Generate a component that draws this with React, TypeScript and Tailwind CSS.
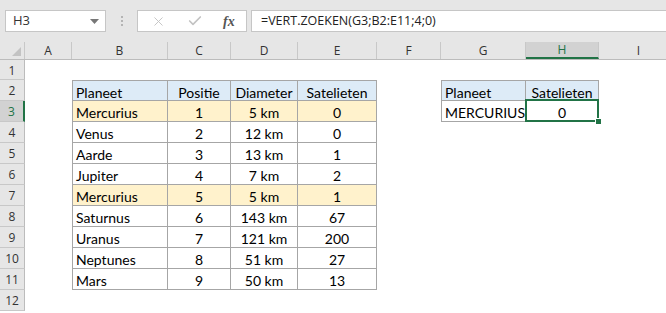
import React from 'react';
import { X, Check } from 'lucide-react';

type Cell = {
  t?: string;
  a?: 'l' | 'c';
  bg?: 'blue' | 'orange';
  box?: boolean;
  tb?: boolean;
  lb?: boolean;
  active?: boolean;
};

const COLS = ['A', 'B', 'C', 'D', 'E', 'F', 'G', 'H', 'I'];
const WIDTHS = [
  'w-[47px]',
  'w-[96px]',
  'w-[63px]',
  'w-[67px]',
  'w-[79px]',
  'w-[64px]',
  'w-[85px]',
  'w-[73px]',
  'w-[80px]',
];

const planets: [string, string, string, string, boolean][] = [
  ['Mercurius', '1', '5 km', '0', true],
  ['Venus', '2', '12 km', '0', false],
  ['Aarde', '3', '13 km', '1', false],
  ['Jupiter', '4', '7 km', '2', false],
  ['Mercurius', '5', '5 km', '1', true],
  ['Saturnus', '6', '143 km', '67', false],
  ['Uranus', '7', '121 km', '200', false],
  ['Neptunes', '8', '51 km', '27', false],
  ['Mars', '9', '50 km', '13', false],
];

// build the sheet contents, row by row (rows 1..12, cols A..I)
function buildRows(): Cell[][] {
  const rows: Cell[][] = [];
  for (let r = 1; r <= 12; r++) rows.push(COLS.map(() => ({})));

  const head = rows[1];
  head[1] = { t: 'Planeet', a: 'l', bg: 'blue', box: true, tb: true, lb: true };
  head[2] = { t: 'Positie', a: 'c', bg: 'blue', box: true, tb: true };
  head[3] = { t: 'Diameter', a: 'c', bg: 'blue', box: true, tb: true };
  head[4] = { t: 'Satelieten', a: 'c', bg: 'blue', box: true, tb: true };
  head[6] = { t: 'Planeet', a: 'l', bg: 'blue', box: true, tb: true, lb: true };
  head[7] = { t: 'Satelieten', a: 'c', bg: 'blue', box: true, tb: true };

  planets.forEach(([name, pos, dia, sat, hl], i) => {
    const row = rows[i + 2];
    const bg = hl ? 'orange' : undefined;
    row[1] = { t: name, a: 'l', bg, box: true, lb: true };
    row[2] = { t: pos, a: 'c', bg, box: true };
    row[3] = { t: dia, a: 'c', bg, box: true };
    row[4] = { t: sat, a: 'c', bg, box: true };
  });

  rows[2][6] = { t: 'MERCURIUS', a: 'l', box: true, lb: true };
  rows[2][7] = { t: '0', a: 'c', box: true, active: true };
  return rows;
}

const SheetCell: React.FC<{ c: Cell; w: string }> = ({ c, w }) => {
  const cls = [
    'relative h-full shrink-0 flex items-center pt-[3px] text-[14px] text-black whitespace-nowrap',
    w,
    c.active ? '' : 'overflow-hidden',
    c.a === 'c' ? 'justify-center' : 'pl-[3px]',
    c.bg === 'blue' ? 'bg-[#ddebf7]' : c.bg === 'orange' ? 'bg-[#fff2cc]' : 'bg-white',
    c.box ? 'border-r border-b border-[#a6a6a6]' : '',
    c.tb ? 'border-t' : '',
    c.lb ? 'border-l' : '',
  ].join(' ');
  return (
    <div className={cls}>
      {c.t}
      {c.active && (
        <>
          <div className="absolute -top-[2px] -left-px -right-px -bottom-px border-2 border-[#217346] z-10" />
          <div className="absolute -right-[4px] -bottom-[4px] w-[7px] h-[7px] bg-[#217346] border border-white z-20" />
        </>
      )}
    </div>
  );
};

export default function App() {
  const rows = buildRows();

  return (
    <div
      className="w-[666px] h-[313px] overflow-hidden bg-white"
      style={{ fontFamily: 'Lato, "Open Sans", sans-serif' }}
    >
      {/* formula bar */}
      <div className="h-[42px] bg-[#e6e6e6] flex items-start pt-[10px] pl-[5px]">
        <div className="w-[101px] h-[22px] bg-white border border-[#c6c6c6] flex items-center justify-between pl-[7px] pr-[6px]">
          <span className="text-[13px] text-[#333]" style={{ fontFamily: '"Open Sans", sans-serif' }}>
            H3
          </span>
          <svg width="9" height="5" viewBox="0 0 9 5">
            <polygon points="0,0 9,0 4.5,5" fill="#777" />
          </svg>
        </div>
        <div className="ml-[15px] mt-[6px] flex flex-col gap-[2px]">
          <div className="w-[2px] h-[2px] bg-[#b4b4b4]" />
          <div className="w-[2px] h-[2px] bg-[#b4b4b4]" />
          <div className="w-[2px] h-[2px] bg-[#b4b4b4]" />
        </div>
        <div className="ml-[14px] w-[110px] h-[22px] bg-white border border-[#c6c6c6] flex items-center pl-[13px]">
          <X className="w-[15px] h-[15px] text-[#c3c3c3]" strokeWidth={1.5} />
          <Check className="ml-[21px] w-[16px] h-[16px] text-[#c3c3c3]" strokeWidth={2.5} />
          <span
            className="ml-[20px] text-[14px] italic font-bold text-[#555]"
            style={{ fontFamily: '"Liberation Serif", serif' }}
          >
            fx
          </span>
        </div>
        <div className="ml-[4px] flex-1 h-[22px] bg-white border border-[#c6c6c6] border-r-0 flex items-center pl-[9px]">
          <span className="text-[12.5px] text-[#222]" style={{ fontFamily: '"Open Sans", sans-serif' }}>
            =VERT.ZOEKEN(G3;B2:E11;4;0)
          </span>
        </div>
      </div>

      {/* column headers */}
      <div
        className="flex h-[18px] bg-[#e6e6e6] border-b border-[#bcbcbc] text-[12px] text-[#333]"
        style={{ fontFamily: '"Open Sans", sans-serif' }}
      >
        <div className="w-[25px] shrink-0 h-full border-r border-[#c8c8c8] relative">
          <svg className="absolute right-[3px] bottom-[3px]" width="9" height="9" viewBox="0 0 9 9">
            <polygon points="9,0 9,9 0,9" fill="#c3c3c3" />
          </svg>
        </div>
        {COLS.map((k, i) =>
          k === 'H' ? (
            <div
              key={k}
              className={`${WIDTHS[i]} shrink-0 h-full flex items-center justify-center bg-[#d2d2d2] text-[#217346] border-r border-[#c8c8c8] border-b-2 border-b-[#217346]`}
            >
              {k}
            </div>
          ) : (
            <div
              key={k}
              className={`${WIDTHS[i]} shrink-0 h-full flex items-center justify-center border-r border-[#c8c8c8]`}
            >
              {k}
            </div>
          )
        )}
      </div>

      {/* sheet rows */}
      {rows.map((cells, ri) => {
        const n = ri + 1;
        const sel = n === 3;
        return (
          <div key={n} className={`flex ${n === 1 ? 'h-[20px]' : 'h-[21px]'}`}>
            <div
              className={`w-[25px] shrink-0 h-full flex items-center justify-center pt-[2px] text-[12px] border-b border-[#c8c8c8] ${
                sel
                  ? 'bg-[#d2d2d2] text-[#217346] border-r-2 border-r-[#217346]'
                  : 'bg-[#e6e6e6] text-[#333] border-r border-r-[#bcbcbc]'
              }`}
              style={{ fontFamily: '"Open Sans", sans-serif' }}
            >
              {n}
            </div>
            {cells.map((c, ci) => (
              <SheetCell key={ci} c={c} w={WIDTHS[ci]} />
            ))}
          </div>
        );
      })}
    </div>
  );
}
